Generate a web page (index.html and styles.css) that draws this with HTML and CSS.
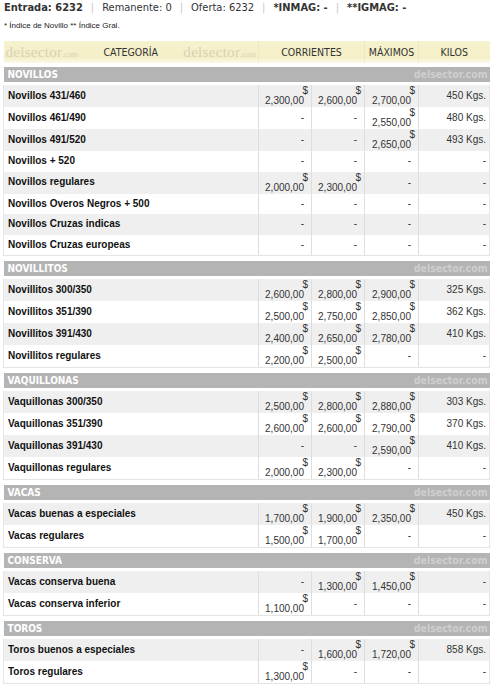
FILE: index.html
```html
<!DOCTYPE html>
<html>

<head>
    <meta name="viewport" content="width=device-width, initial-scale=1" />
    <link rel="stylesheet" href="styles.css">
</head>

<body>
    <div class="stats">
        <b>Entrada: 6232</b><span class="sep">|</span>Remanente: 0<span class="sep">|</span>Oferta: 6232<span class="sep">|</span><b>*INMAG: -</b><span class="sep">|</span><b>**IGMAG: -</b>
    </div>
    <div class="legend">* Índice de Novillo ** Índice Gral.</div>

    <table class="prices">
        <colgroup>
            <col class="c-cat">
            <col class="c-val">
            <col class="c-val">
            <col class="c-max">
            <col class="c-kg">
        </colgroup>
        <thead>
            <tr>
                <th class="th-cat">
                    <div class="th-inner">
                        <span class="logo">delsector<small>.com</small></span>
                        <span>CATEGORÍA</span>
                        <span class="logo">delsector<small>.com</small></span>
                    </div>
                </th>
                <th colspan="2">CORRIENTES</th>
                <th>MÁXIMOS</th>
                <th>KILOS</th>
            </tr>
        </thead>
        <tbody id="rows"></tbody>
    </table>

    <script>
        const data = [
            ["NOVILLOS", [
                ["Novillos 431/460", "2,300,00", "2,600,00", "2,700,00", "450 Kgs."],
                ["Novillos 461/490", "", "", "2,550,00", "480 Kgs."],
                ["Novillos 491/520", "", "", "2,650,00", "493 Kgs."],
                ["Novillos + 520", "", "", "", ""],
                ["Novillos regulares", "2,000,00", "2,300,00", "", ""],
                ["Novillos Overos Negros + 500", "", "", "", ""],
                ["Novillos Cruzas indicas", "", "", "", ""],
                ["Novillos Cruzas europeas", "", "", "", ""]
            ]],
            ["NOVILLITOS", [
                ["Novillitos 300/350", "2,600,00", "2,800,00", "2,900,00", "325 Kgs."],
                ["Novillitos 351/390", "2,500,00", "2,750,00", "2,850,00", "362 Kgs."],
                ["Novillitos 391/430", "2,400,00", "2,650,00", "2,780,00", "410 Kgs."],
                ["Novillitos regulares", "2,200,00", "2,500,00", "", ""]
            ]],
            ["VAQUILLONAS", [
                ["Vaquillonas 300/350", "2,500,00", "2,800,00", "2,880,00", "303 Kgs."],
                ["Vaquillonas 351/390", "2,600,00", "2,600,00", "2,790,00", "370 Kgs."],
                ["Vaquillonas 391/430", "", "", "2,590,00", "410 Kgs."],
                ["Vaquillonas regulares", "2,000,00", "2,300,00", "", ""]
            ]],
            ["VACAS", [
                ["Vacas buenas a especiales", "1,700,00", "1,900,00", "2,350,00", "450 Kgs."],
                ["Vacas regulares", "1,500,00", "1,700,00", "", ""]
            ]],
            ["CONSERVA", [
                ["Vacas conserva buena", "", "1,300,00", "1,450,00", ""],
                ["Vacas conserva inferior", "1,100,00", "", "", ""]
            ]],
            ["TOROS", [
                ["Toros buenos a especiales", "", "1,600,00", "1,720,00", "858 Kgs."],
                ["Toros regulares", "1,300,00", "", "", ""]
            ]]
        ];

        function price(v) {
            if (!v) return '<span class="num">-</span>';
            return '<span class="cur">$</span><span class="num">' + v + '</span>';
        }

        let html = "";
        for (const [title, rows] of data) {
            html += '<tr class="section"><td colspan="5"><div class="band"><span>' + title +
                '</span><span class="mark">delsector.com</span></div></td></tr>';
            rows.forEach((r, i) => {
                let cls = i % 2 == 0 ? "odd" : "even";
                if (i == rows.length - 1) cls += " last";
                html += '<tr class="' + cls + '"><td class="cat">' + r[0] + '</td>' +
                    '<td class="val">' + price(r[1]) + '</td>' +
                    '<td class="val">' + price(r[2]) + '</td>' +
                    '<td class="val">' + price(r[3]) + '</td>' +
                    '<td class="kg">' + (r[4] || "-") + '</td></tr>';
            });
        }
        document.getElementById("rows").innerHTML = html;
    </script>
</body>

</html>
```

FILE: styles.css
```css
body {
    margin: 0;
    padding: 1px 3px 0;
    font-family: "DejaVu Sans Condensed", "DejaVu Sans", sans-serif;
    color: #333;
    background-color: #fff;
}

.stats {
    font-size: 11px;
    line-height: 14px;
    padding-left: 1px;
}

.sep {
    color: #c8c8c8;
    padding: 0 8px;
}

.legend {
    font-family: "Liberation Sans", Arial, sans-serif;
    font-size: 8px;
    line-height: 10px;
    margin-top: 6px;
    padding-left: 1px;
    color: #222;
}

.prices {
    margin-top: 10px;
    width: 486px;
    table-layout: fixed;
    border-collapse: collapse;
}

.c-cat { width: 255px; }
.c-val { width: 53px; }
.c-max { width: 54px; }
.c-kg { width: 71px; }

thead th {
    height: 22px;
    padding: 0;
    font-size: 10.5px;
    font-weight: normal;
    color: #333;
    background: linear-gradient(#f6f2cf, #f4efc6 75%, #fbf9ea);
    border-left: 1px solid #ece7c4;
}

thead th.th-cat {
    border-left: none;
}

.th-inner {
    display: flex;
    justify-content: space-between;
    align-items: center;
    padding: 0 2px;
}

.logo {
    font-family: "Liberation Serif", serif;
    font-size: 15px;
    color: #d8d2b6;
    letter-spacing: 0.3px;
}

.logo small {
    font-size: 8px;
    letter-spacing: 0;
}

.section td {
    padding: 5px 0 3px;
}

.section:first-child td {
    padding-top: 4px;
}

.band {
    height: 15px;
    background-color: #b4b4b4;
    color: #fff;
    font-weight: bold;
    font-size: 10px;
    line-height: 15px;
    display: flex;
    justify-content: space-between;
    padding: 0 2px 0 4px;
}

.mark {
    color: #cfcfcf;
    font-size: 10.5px;
}

.odd td {
    background-color: #efefef;
}

.even td {
    background-color: #fff;
}

.last td {
    border-bottom: 1px solid #e4e4e4;
}

td.cat {
    font-family: "Liberation Sans", Arial, sans-serif;
    font-weight: bold;
    font-size: 10px;
    line-height: 12px;
    color: #111;
    padding: 4px 4px 4.5px;
    border-left: 1px solid #e6e6e6;
}

td.val,
td.kg {
    font-family: "Liberation Sans", Arial, sans-serif;
    font-size: 10px;
    line-height: 10px;
    text-align: right;
    padding: 1px 3px;
    border-left: 1px solid #dedede;
    vertical-align: middle;
}

td.kg {
    border-right: 1px solid #e6e6e6;
}

.cur {
    display: block;
}

.num {
    display: block;
    padding-right: 4px;
}
```
